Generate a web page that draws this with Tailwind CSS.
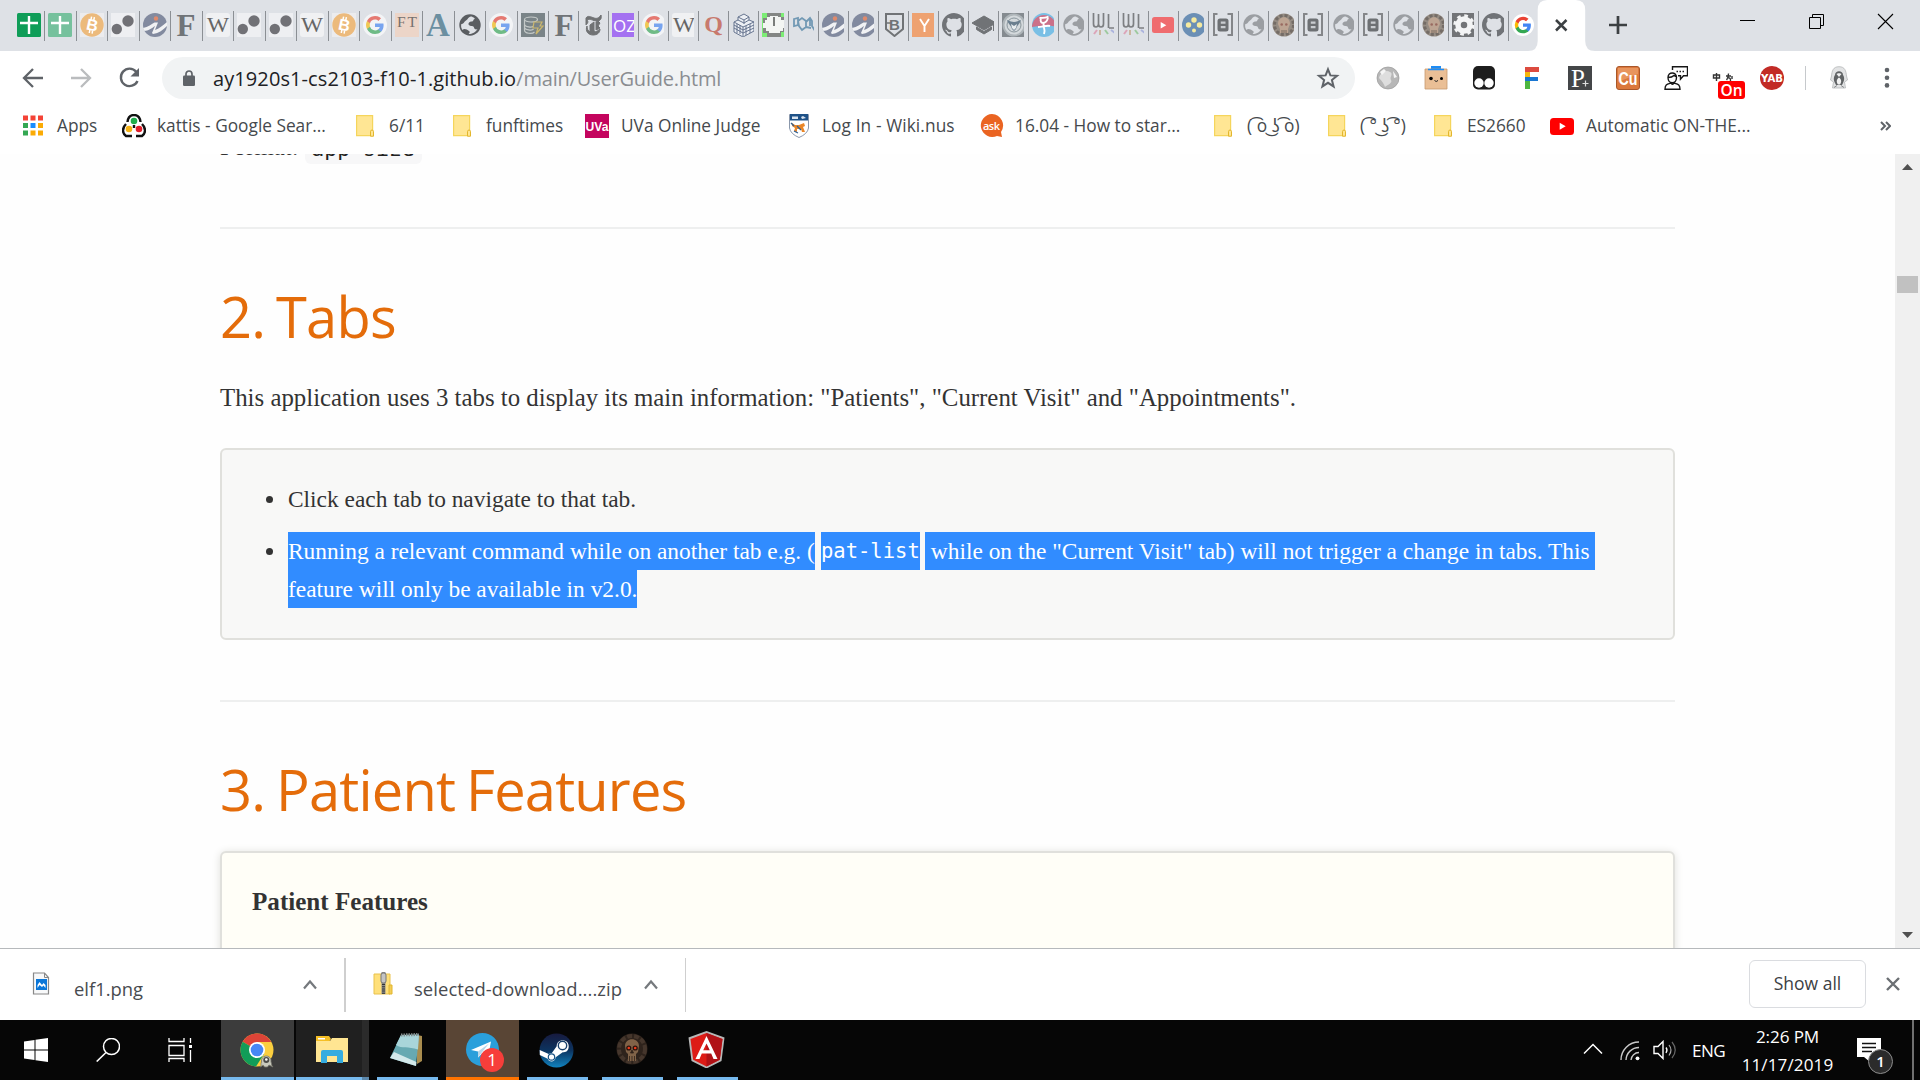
<!DOCTYPE html>
<html lang="en">
<head>
<meta charset="utf-8">
<title>User Guide</title>
<script src="https://cdn.jsdelivr.net/npm/@tailwindcss/browser@4"></script>
</head>
<body class="w-[1920px] h-[1080px] overflow-hidden bg-white flex flex-col font-['Open_Sans','Noto_Sans',sans-serif]">

<!-- shared icon symbols -->
<svg class="hidden" aria-hidden="true">
  <symbol id="sheet" viewBox="0 0 24 24"><rect width="24" height="24" rx="1.5" fill="#0f9d58"/><path d="M3 10h18M12 3v18" stroke="#fff" stroke-width="2.4"/></symbol>
  <symbol id="sheet2" viewBox="0 0 24 24"><rect width="24" height="24" rx="1.5" fill="#76c19d"/><path d="M3 10h18M12 3v18" stroke="#fff" stroke-width="2.4"/></symbol>
  <symbol id="btc" viewBox="0 0 24 24"><rect width="24" height="24" fill="#ececee"/><circle cx="12" cy="12" r="11.7" fill="#ecba7c"/><text x="12.4" y="17.6" font-size="16" font-weight="700" text-anchor="middle" fill="#fff" font-family="Liberation Sans" transform="rotate(12 12 12)">B</text><path d="M11.6 3.6l-.6 3M14.4 4.2l-.6 3M9.8 17l-.5 3M12.6 17.6l-.5 3" stroke="#fff" stroke-width="1.5"/></symbol>
  <symbol id="dots" viewBox="0 0 24 24"><rect width="24" height="24" fill="#eeeff2"/><circle cx="17" cy="8" r="5.7" fill="#717176"/><circle cx="5.8" cy="16" r="5.2" fill="#717176"/></symbol>
  <symbol id="info" viewBox="0 0 24 24"><circle cx="12" cy="12" r="12" fill="#828a9f"/><path d="M0 15C5 14 9 11 11.500 9.500H15L12 17C16 16 20 12 24 9v4c-4 4-8 7-14 8l-1-1 3-7C9 15 5 18 1.500 18z" fill="#f1f2f4"/><circle cx="13" cy="5.500" r="2.200" fill="#e08a6c"/></symbol>
  <symbol id="ef" viewBox="0 0 24 24"><text x="12" y="22.6" font-size="32" font-weight="700" text-anchor="middle" fill="#707478" font-family="Liberation Serif" textLength="19" lengthAdjust="spacingAndGlyphs">F</text></symbol>
  <symbol id="wiki" viewBox="0 0 24 24"><rect width="24" height="24" rx="3" fill="#f0f1f3"/><text x="12" y="19" font-size="20" text-anchor="middle" fill="#666" font-family="Liberation Serif" textLength="22" lengthAdjust="spacingAndGlyphs">W</text></symbol>
  <symbol id="goo" viewBox="0 0 24 24"><circle cx="12" cy="12" r="12" fill="#fff"/><g transform="translate(3 3)"><path fill="#4285f4" d="M17.600 9.200c0-.6-.1-1.300-.2-1.800H9v3.500h4.800a4.200 4.200 0 0 1-1.800 2.700v2.300h3c1.700-1.600 2.600-4 2.600-6.700z"/><path fill="#34a853" d="M9 18c2.400 0 4.500-.8 6-2.200l-3-2.200a5.400 5.400 0 0 1-8-2.900H1v2.300A9 9 0 0 0 9 18z"/><path fill="#fbbc05" d="M4 10.700a5.400 5.400 0 0 1 0-3.400V5H1a9 9 0 0 0 0 8z"/><path fill="#ea4335" d="M9 3.600c1.300 0 2.500.5 3.400 1.300L15 2.300A9 9 0 0 0 1 5l3 2.300a5.400 5.400 0 0 1 5-3.700z"/></g></symbol>
  <symbol id="gfade" viewBox="0 0 24 24"><use href="#goo" opacity=".65"/></symbol>
  <symbol id="ft" viewBox="0 0 24 24"><rect width="24" height="24" fill="#ecd5c8"/><text x="12" y="14" font-size="15.500" text-anchor="middle" fill="#75706e" font-family="Liberation Serif" textLength="20">FT</text></symbol>
  <symbol id="aa" viewBox="0 0 24 24"><text x="12" y="23" font-size="33" font-weight="700" text-anchor="middle" fill="#6b8fa1" font-family="Liberation Serif">A</text></symbol>
  <symbol id="globe" viewBox="0 0 24 24"><circle cx="12" cy="12" r="10.700" fill="#5a5d61"/><path d="M13 3.500C10 4 10 6.500 8 7.500S6 11 3.300 11c-.6 3 .2 4.500 1.200 6 1.500-2 4.500-.5 6.500 1s-1 2.500 0 3c3 0 7-2 8.500-5-1.500 1-3.500 0-3.500-1.500s-2-1.500-3-1.500-3-1-2.500-2.500 2-2 3.500-2 1-2 2.500-2.500S14 3.500 13 3.500z" fill="#dee1e6"/></symbol>
  <symbol id="gl2" viewBox="0 0 24 24"><use href="#globe" opacity=".5"/></symbol>
  <symbol id="db" viewBox="0 0 24 24"><rect width="24" height="24" fill="#7a8488"/><g fill="none" stroke="#c4c9c8" stroke-width="1.200"><ellipse cx="10" cy="6.500" rx="6.500" ry="2.500"/><path d="M3.500 7v10c0 4 8 4 10 2M3.500 11c0 3 8 4 9 2M3.500 14c0 3 8 4 9 2"/></g><path d="M13 9h8l-2 4h3l-7 8 2-6h-5z" fill="#7a8488" stroke="#cbb76e" stroke-width="1.200"/></symbol>
  <symbol id="nyt" viewBox="0 0 24 24"><path d="M4 5c2-3 5-1 8 0s5 0 7-3c1 4-1 6-4 6-4 0-7-3-10-1 2 2 0 4-1 5V8zM5 13c-2 5 1 9 6 9 4 0 7-2 7-6l-4 3-2-1V9L8 12v7c-2-1-3-3-3-6zM14 9v8l4-2-2-2 2-3-2-2z" fill="#707274" stroke="#707274"/></symbol>
  <symbol id="oz" viewBox="0 0 24 24"><rect width="24" height="24" fill="#a471f1"/><text x="12.500" y="18.500" font-size="17" text-anchor="middle" fill="#fff" font-family="Open Sans" textLength="23">OZ</text></symbol>
  <symbol id="quo" viewBox="0 0 24 24"><text x="11.500" y="19" font-size="24" font-weight="700" text-anchor="middle" fill="#c8796d" font-family="Liberation Serif">Q</text></symbol>
  <symbol id="bldg" viewBox="0 0 24 24"><path d="M2 9l4-2V4l6-3 5 3v3l5 2v9l-11 6-9-5z" fill="#eceff4" stroke="#66748f" stroke-width="1"/><path d="M6 7l6 3 5-3M6 4l6 3 5-3M12 7v4M2 9l9 5 11-5M11 14v9M2 12l9 5 11-5M2 15l9 5 11-5M5 11v9M8 12v9M14 13v9M18 11v9" fill="none" stroke="#66748f" stroke-width="1"/></symbol>
  <symbol id="clock" viewBox="0 0 24 24"><rect width="24" height="24" fill="#7ced75"/><path d="M5 0h14v4h4v15h-4v5H5v-4H1V5h4z" fill="#838684"/><path d="M8 3h8v1h3v3h3v3h1v5h-2v3h-3v2H7v-2H4v-3H1v-5h2V7h2V4h3z" fill="#f3f5f3"/><path d="M12 4v9" stroke="#7a7d7b" stroke-width="2"/></symbol>
  <symbol id="mol" viewBox="0 0 24 24"><g fill="none" stroke="#7299b4" stroke-width="1.800"><path d="M2 6l4-1v7l-4 1zM6 8l4-3 4 3v6l-4 3-3-4zM14 9l4-4 2 3v5l3 5M18 6v7M14 14l5 1"/></g></symbol>
  <symbol id="shield" viewBox="0 0 24 24"><path d="M4 1h17v15l-8.500 7L4 16z" fill="none" stroke="#707376" stroke-width="2"/><text x="12.500" y="17" font-size="15" font-weight="700" text-anchor="middle" fill="#707376" font-family="Liberation Sans">B</text><path d="M3 10h6" stroke="#707376" stroke-width="1.500"/></symbol>
  <symbol id="yc" viewBox="0 0 24 24"><rect width="24" height="24" fill="#eea271"/><path d="M8 6l4.500 7L17 6M12.500 13v6" stroke="#fff" stroke-width="1.900" fill="none"/></symbol>
  <symbol id="gh" viewBox="0 0 16 16"><path fill="#707377" d="M8 0C3.580 0 0 3.580 0 8c0 3.540 2.290 6.530 5.470 7.590.4.07.55-.17.55-.38 0-.19-.01-.82-.01-1.490-2.010.37-2.530-.49-2.690-.94-.09-.23-.48-.94-.82-1.130-.28-.15-.68-.52-.01-.53.63-.01 1.080.58 1.230.82.72 1.210 1.870.87 2.330.66.07-.52.28-.87.51-1.070-1.780-.2-3.640-.89-3.640-3.950 0-.87.31-1.590.82-2.150-.08-.2-.36-1.020.08-2.120 0 0 .67-.21 2.200.82.64-.18 1.320-.27 2-.27s1.360.09 2 .27c1.530-1.040 2.200-.82 2.200-.82.44 1.100.16 1.920.08 2.120.51.56.82 1.270.82 2.150 0 3.070-1.870 3.750-3.650 3.950.29.25.54.73.54 1.480 0 1.070-.01 1.930-.01 2.200 0 .21.15.46.55.38A8.010 8.010 0 0 0 16 8c0-4.420-3.580-8-8-8z"/></symbol>
  <symbol id="grad" viewBox="0 0 24 24"><path d="M12 3l12 7-12 7L0 10zM4.500 14l7.500 4.500 7.500-4.500v2.500L12 21l-7.500-4.500zM21.500 11v7" fill="#707376" stroke="#707376"/></symbol>
  <symbol id="seal" viewBox="0 0 24 24"><rect width="24" height="24" fill="#858b90"/><circle cx="12" cy="12" r="10.500" fill="#d4d9dc" stroke="#aeb5b9" stroke-width="2"/><circle cx="12" cy="12" r="7" fill="none" stroke="#8a969c" stroke-width="1"/><path d="M5 7c3 1 5 2 7 2s4-1 7-2c-1 4-4 5-5 9l-2 2-2-2C9 12 6 11 5 7z" fill="#6b7f8f"/><path d="M9 11l3 2 3-2-1 4-2 2-2-2z" fill="#e8ecee"/></symbol>
  <symbol id="pink" viewBox="0 0 24 24"><circle cx="12" cy="12" r="12" fill="#79bfe5"/><path d="M0 14a12 12 0 1 1 24 0c-8-3-16-1-24 0z" fill="#cb7189"/><path d="M7.500 5c3 0 7 0 9-1.500M9 5c-1 3 0 5 2 5s4-2 5-5M6 14c4 0 9-2 12-1M12 10c-2 3 2 5 0 11" fill="none" stroke="#fff" stroke-width="1.900"/></symbol>
  <symbol id="wl" viewBox="0 0 24 24"><path d="M1.500 0v11c0 4 5 4 5 0V1M6.500 11c0 4 5 4 5 0V0M16.500 1v14M17 15h6" fill="none" stroke="#7d7f82" stroke-width="1.700"/><path d="M5 17l-3 4" stroke="#dca5b8" stroke-width="2"/><path d="M8 17v5" stroke="#cbb69f" stroke-width="2"/><path d="M13 17l3 4" stroke="#9dca9f" stroke-width="2"/><path d="M19 17l4 3" stroke="#acb4de" stroke-width="2"/></symbol>
  <symbol id="yt" viewBox="0 0 24 24"><rect y="4" width="24" height="17" rx="3.500" fill="#ff0000"/><path d="M9.700 8.800v7l6-3.500z" fill="#fff"/></symbol>
  <symbol id="ytf" viewBox="0 0 24 24"><rect y="4" width="22" height="16" rx="2.500" fill="#ef6c6f"/><path d="M8.700 9v6.600l5.600-3.300z" fill="#fff"/></symbol>
  <symbol id="bdots" viewBox="0 0 24 24"><circle cx="12" cy="12" r="12" fill="#6b8fb5"/><g fill="#f6ea9f"><circle cx="12" cy="7" r="2.700"/><circle cx="6.500" cy="12" r="2.700"/><circle cx="17.500" cy="12" r="2.700"/><circle cx="12" cy="17.500" r="2"/></g></symbol>
  <symbol id="brk" viewBox="0 0 24 24"><path d="M5.500 1H2v21h3.500M15.500 1H20v21h-4.500" fill="none" stroke="#848689" stroke-width="2"/><rect x="5.500" y="5.500" width="11" height="13" rx="2.500" fill="#6d7073"/><path d="M8.800 8.600h4.700v2.200H8.800zM8.800 13h4.700v2.200H8.800z" fill="#c9ccd0"/></symbol>
  <symbol id="skullf" viewBox="0 0 24 24"><circle cx="12" cy="12" r="11.500" fill="#968d84"/><circle cx="12" cy="12" r="9.500" fill="none" stroke="#746c66" stroke-width="3" stroke-dasharray="3 2"/><path d="M6 11c0-9 12-9 12 0l-2 5v4H8v-4z" fill="#bda593"/><circle cx="9.700" cy="11.500" r="1.300" fill="#996a60"/><circle cx="14.300" cy="11.500" r="1.300" fill="#996a60"/><path d="M10 17v3M12 17v3M14 17v3" stroke="#776b60"/></symbol>
  <symbol id="gear" viewBox="0 0 24 24"><rect width="24" height="24" fill="#727477"/><circle cx="12" cy="12" r="6" fill="none" stroke="#f3f4f5" stroke-width="5.500"/><circle cx="12" cy="12" r="9.300" fill="none" stroke="#f3f4f5" stroke-width="2.800" stroke-dasharray="3.650 3.650"/></symbol>
  <symbol id="folder" viewBox="0 0 18 22"><path d="M.6.600h16v20H.6z" fill="#ffe694" stroke="#f5d55c" stroke-width="1.200"/><path d="M14.500 21.200v-4.500q0-1.700 1.500-1.700t1.500 1.700v4.500z" fill="#ffe694" stroke="#e3b62d" stroke-width="1"/></symbol>
  <symbol id="nus" viewBox="0 0 20 24"><path d="M.5.500h19V14q-1 6-9.500 9.500Q1.500 20 .5 14z" fill="#fff" stroke="#8a97ab"/><path d="M1 0h18v6.500H1z" fill="#1e5187"/><path d="M3 2.500h6v2.500H3zM12 3l2-1 3 2-4 1z" fill="#d9e3ee"/><path d="M3 9l3 2 4 0 5-2 1 3-2 1 2 5-3 0-1-3-4 0 0 3-3-1 1-3-3-2z" fill="#e98628"/><path d="M2 9l3 3M8 12l4 4M5 17l4 2" stroke="#2f5f93" stroke-width="1.300"/></symbol>
</svg>

<!-- tab strip -->
<header class="h-[51px] shrink-0 bg-[#dee1e6] flex pl-[13.7px]">
  <div id="tabs" class="flex pt-[11px] shrink-0 relative z-10"></div>
  <div class="relative w-[67px] shrink-0">
    <svg class="block w-[67px] h-[51px]" viewBox="0 0 67 51"><path d="M0 51q9.700 0 9.700-10V10q0-10 9.500-10h28.500q9.500 0 9.500 10v31q0 10 9.800 10z" fill="#fff"/><path d="M28 20l10.500 10.500M38.500 20L28 30.500" stroke="#3c4043" stroke-width="2.500"/></svg>
  </div>
  <svg class="w-[20px] h-[20px] ml-[13px] mt-[15px]" viewBox="0 0 20 20"><path d="M1 10h18M10 1v18" stroke="#3c4043" stroke-width="2.700"/></svg>
  <div class="ml-auto flex gap-[52px] pt-[13px] pr-[26px]" >
    <svg class="w-[17px] h-[17px]" viewBox="0 0 17 17"><path d="M1 7.500h15" stroke="#000"/></svg>
    <svg class="w-[17px] h-[17px]" viewBox="0 0 17 17"><path d="M1.500 4.500h11v11h-11zM4.500 4.500v-3h11v11h-3" fill="none" stroke="#000"/></svg>
    <svg class="w-[17px] h-[17px]" viewBox="0 0 17 17"><path d="M1 1l15 15M16 1L1 16" stroke="#000" stroke-width="1.100"/></svg>
  </div>
</header>

<!-- toolbar -->
<div class="h-[54px] shrink-0 flex items-center pl-[20px]">
  <svg class="w-[26px] h-[26px]" viewBox="0 0 26 26"><path d="M23 13H5M13 4l-9 9 9 9" fill="none" stroke="#5f6368" stroke-width="2.300"/></svg>
  <svg class="w-[26px] h-[26px] ml-[22px]" viewBox="0 0 26 26"><path d="M3 13h18M13 4l9 9-9 9" fill="none" stroke="#babcbe" stroke-width="2.300"/></svg>
  <svg class="w-[26px] h-[26px] ml-[22px]" viewBox="0 0 26 26"><path d="M20.200 6.700A8.700 8.700 0 1 0 21.500 16" fill="none" stroke="#5f6368" stroke-width="2.400"/><path d="M23 3v8.500h-8.500z" fill="#5f6368"/></svg>
  <div class="ml-[20px] w-[1193px] h-[42px] rounded-full bg-[#f1f3f4] flex items-center pl-[21px] pr-[15px]">
    <svg class="w-[12px] h-[17px]" viewBox="0 0 12 17"><rect y="5.500" width="12" height="10.500" rx="1.300" fill="#5f6368"/><path d="M3 6V4a3 3 0 0 1 6 0v2" fill="none" stroke="#5f6368" stroke-width="1.700"/></svg>
    <p class="ml-[18px] text-[20px] leading-[27px] whitespace-nowrap text-[#8a8d91] tracking-[-0.19px]"><span class="text-[#202124] tracking-[0.09px]">ay1920s1-cs2103-f10-1.github.io</span>/main/UserGuide.html</p>
    <svg class="ml-auto w-[24px] h-[24px]" viewBox="0 0 24 24"><path d="M12 3.300l2.400 6.100 6.600.4-5.100 4.200 1.700 6.400L12 16.800l-5.600 3.600L8.100 14 3 9.800l6.600-.4z" fill="none" stroke="#5f6368" stroke-width="2"/></svg>
  </div>
  <div class="flex items-center ml-[21px] gap-[24px]">
    <svg class="w-[24px] h-[24px]" viewBox="0 0 24 24"><circle cx="12" cy="12" r="11" fill="#b7b7b7" stroke="#999" stroke-width=".7"/><path d="M3 12c1-5 7-9 11-6 4 2-1 5 1 8s-4 5-6 7c-1-3-3-6-6-9z" fill="#dedede"/><path d="M4 6l4-3 2 2-4 4zM17 5l4 6-3 1z" fill="#f5f5f5"/></svg>
    <svg class="w-[24px] h-[24px]" viewBox="0 0 24 24"><path d="M7 0h10v4H7z" fill="#1d8cf5"/><path d="M1 3h22v20H1z" fill="#eabf96" stroke="#c79b70" stroke-width=".8"/><path d="M4 3.500h16" stroke="#1d8cf5" stroke-width="1.500"/><circle cx="7" cy="12.500" r="1.800"/><circle cx="17.500" cy="12.500" r="1.500"/><path d="M10.500 14.500q1.700 2 3.500 0" fill="none" stroke="#222"/></svg>
    <svg class="w-[24px] h-[24px]" viewBox="0 0 24 24"><rect x="1" width="22" height="23.500" rx="5" fill="#1d1d1d"/><circle cx="7" cy="17" r="4.700" fill="#fff"/><circle cx="17" cy="17" r="4.700" fill="#fff"/></svg>
    <svg class="w-[24px] h-[24px]" viewBox="0 0 24 24"><path d="M5 1h14v5H5z" fill="#dc4b3f"/><path d="M5 6h5v6H5z" fill="#f5b70d"/><path d="M5 11h13v4H5z" fill="#1976d2"/><path d="M5 15h5v8H5z" fill="#4eb640"/></svg>
    <svg class="w-[24px] h-[24px]" viewBox="0 0 24 24"><rect width="24" height="24" fill="#444648"/><text x="10" y="20.500" font-size="25" text-anchor="middle" fill="#fff" font-family="Liberation Serif">P</text><path d="M14.500 17.500h6M17.500 14.500v6" stroke="#ddd" stroke-width="1.200"/></svg>
    <svg class="w-[24px] h-[24px]" viewBox="0 0 24 24"><rect x=".5" y=".5" width="23" height="23" rx="2.500" fill="#db783c" stroke="#a9572a"/><path d="M2 2h20v6L2 16z" fill="#e8955e"/><text x="12" y="18.500" font-size="19" font-weight="700" text-anchor="middle" fill="#fff" font-family="Liberation Sans" textLength="19" lengthAdjust="spacingAndGlyphs">Cu</text></svg>
    <svg class="w-[24px] h-[24px]" viewBox="0 0 24 24"><path d="M8.500 4V.700h15v9h-4l-3 3.500V9.700h-2.500M1 23.200c0-5 2-5 6-6 1.500 1.500 1.500 1.500 3 0 4 1 6 1 6 6zM4 11.500c0-6 8.500-6 8.500 0 0 7-8.500 7-8.500 0zM4 11.500c3 0 5-1 6-2l2.500 1.500" fill="none" stroke="#161616" stroke-width="1.400"/><path d="M12.500 5.500h8" stroke="#222" stroke-width="1.300" stroke-dasharray="1.500 1.500"/></svg>
    <div class="relative w-[24px] h-[24px]">
      <svg class="w-[24px] h-[24px]" viewBox="0 0 24 24"><path d="M1.500 9h6v3h-6zM4.500 7v8M14 10h5M16.500 7.500c0 4-1 5-2 6.500M15 12q4-1 3.500 3M20 10v3" fill="none" stroke="#333" stroke-width="1.400"/></svg>
      <span class="absolute left-[6px] top-[15px] w-[27px] h-[18px] rounded-[3px] bg-[#ff0000] text-white text-[15.500px] leading-[19px] font-semibold text-center">On</span>
    </div>
    <svg class="w-[24px] h-[24px]" viewBox="0 0 24 24"><circle cx="12" cy="12" r="12" fill="#c22b26"/><text x="12" y="16" font-size="11" font-weight="700" text-anchor="middle" fill="#fff" font-family="DejaVu Sans" textLength="22" lengthAdjust="spacingAndGlyphs">YAB</text></svg>
  </div>
  <div class="w-px h-[24px] bg-[#c6c9cc] ml-[21px]"></div>
  <svg class="w-[24px] h-[24px] ml-[21px]" viewBox="0 0 24 24"><path d="M12 .7C6 .7 5 5 4.500 10l-1 4 3 2-1 6h13l-1-6 3-2-1-4C19 5 18 .7 12 .7z" fill="#e2e3e4" stroke="#b4b6b8" stroke-width=".8"/><path d="M8 9c0-5 8-5 8 0 2 3 1 6 0 8l-1 2H9l-1-2c-1-2-2-5 0-8z" fill="#606365"/><path d="M9.500 8c1-1 4-1 5 0l-2.500 3zM12 11.500c3 2 2.500 5 1 7h-2c-1.500-2-2-5 1-7z" fill="#f1f1f1"/><path d="M7 21.500l3-2M17 21.500l-3-2" stroke="#8b8d8f"/></svg>
  <svg class="w-[6px] h-[22px] ml-[33px]" viewBox="0 0 6 22"><circle cx="3" cy="3" r="2.300" fill="#5f6368"/><circle cx="3" cy="10.700" r="2.300" fill="#5f6368"/><circle cx="3" cy="18.400" r="2.300" fill="#5f6368"/></svg>
</div>

<!-- bookmarks bar -->
<nav class="h-[49px] shrink-0 flex pl-[23px] text-[17.3px] leading-[24px] text-[#45494d] whitespace-nowrap pt-[9px]">
  <div class="w-[99px] flex gap-[14px]">
    <svg class="w-[20px] h-[24px] shrink-0" viewBox="0 0 20 24"><g transform="translate(0 1.500)"><path fill="#f44336" d="M0 0h5v5H0zM7.500 0h5v5h-5zM15 0h5v5h-5z"/><path fill="#34a853" d="M0 7.500h5v5H0zM0 15h5v5H0z"/><path fill="#1a8cff" d="M7.500 7.500h5v5h-5z"/><path fill="#fbab05" d="M15 7.500h5v5h-5zM7.500 15h5v5h-5zM15 15h5v5h-5z"/></g></svg>Apps</div>
  <div class="w-[234px] flex gap-[11px]">
    <svg class="w-[24px] h-[24px] shrink-0" viewBox="0 0 24 24"><path d="M5.500 8C6 3 9 1 12 1s6 2 6.500 7M4 10c-4 4-4 9 0 12h6M20 10c4 4 4 9 0 12h-6M12 11v3" fill="none" stroke="#111" stroke-width="2.400"/><circle cx="12" cy="7" r="3.300" fill="#1fae4c"/><circle cx="7" cy="15" r="3.300" fill="#f5b315"/><circle cx="17" cy="15" r="3.300" fill="#e01e2b"/></svg>kattis - Google Sear...</div>
  <div class="w-[97px] flex gap-[15px]"><svg class="w-[18px] h-[24px] shrink-0"><use href="#folder"/></svg>6/11</div>
  <div class="w-[132px] flex gap-[15px]"><svg class="w-[18px] h-[24px] shrink-0"><use href="#folder"/></svg>funftimes</div>
  <div class="w-[204px] flex gap-[12px]"><svg class="w-[24px] h-[24px] shrink-0" viewBox="0 0 24 24"><rect width="24" height="24" fill="#c4055e"/><text x="12" y="17" font-size="12" font-weight="700" text-anchor="middle" fill="#fff" font-family="Liberation Sans" textLength="23" lengthAdjust="spacingAndGlyphs">UVa</text></svg>UVa Online Judge</div>
  <div class="w-[191px] flex gap-[13px] tracking-[0.1px]"><svg class="w-[20px] h-[24px] shrink-0"><use href="#nus"/></svg>Log In - Wiki.nus</div>
  <div class="w-[234px] flex gap-[11px]"><svg class="w-[24px] h-[24px] shrink-0" viewBox="0 0 24 24"><path d="M12 0a11.500 11.500 0 1 0 5 22l5 1-1-5A11.500 11.500 0 0 0 12 0z" fill="#ea6422"/><text x="11.500" y="15.500" font-size="11" font-weight="600" text-anchor="middle" fill="#fff" font-family="Open Sans" textLength="17">ask</text></svg>16.04 - How to star...</div>
  <div class="w-[114px] flex gap-[15px]"><svg class="w-[18px] h-[24px] shrink-0"><use href="#folder"/></svg><span class="tracking-[0.1px]">( ͡o ͜ʖ ͡o)</span></div>
  <div class="w-[106px] flex gap-[14px]"><svg class="w-[18px] h-[24px] shrink-0"><use href="#folder"/></svg><span>( ͡° ͜ʖ ͡°)</span></div>
  <div class="w-[116px] flex gap-[15px]"><svg class="w-[18px] h-[24px] shrink-0"><use href="#folder"/></svg>ES2660</div>
  <div class="w-[330px] flex gap-[12px]"><svg class="w-[24px] h-[24px] shrink-0"><use href="#yt"/></svg>Automatic ON-THE...</div>
  <svg class="w-[11px] h-[24px] shrink-0" viewBox="0 0 11 24"><path d="M1 8l4 4-4 4M6 8l4 4-4 4" fill="none" stroke="#5f6368" stroke-width="2"/></svg>
</nav>

<!-- page -->
<div class="h-[794px] shrink-0 flex overflow-hidden bg-[#fefefe]">
  <main class="w-[1455px] ml-[220px] shrink-0 font-['Liberation_Serif',serif] text-[#333]">
    <p class="-mt-[26px] h-[37px] flex text-[24.8px] leading-[37px]">Format: <code class="ml-[6px] h-[36px] w-[117px] bg-[#f7f7f8] rounded-[6px] text-center text-[21.500px] leading-[41px] text-[#222] font-['DejaVu_Sans_Mono',monospace]">app-size</code></p>
    <hr class="mt-[62px] h-[2px] border-0 bg-[#eeefef]">
    <h2 class="mt-[53px] text-[56px] leading-[68px] text-[#e46c0a] tracking-[-0.8px] [word-spacing:-2.8px] font-['Open_Sans',sans-serif]">2. Tabs</h2>
    <p class="mt-[29px] text-[24.850px] leading-[37px] whitespace-nowrap">This application uses 3 tabs to display its main information: "Patients", "Current Visit" and "Appointments".</p>
    <div class="mt-[32px] h-[192px] border-2 border-[#e0e0dc] rounded-[6px] bg-[#f8f8f7] py-[30px] pl-[44px] text-[23.4px] leading-[38px]">
      <ul class="flex flex-col gap-[14px]">
        <li class="flex"><span class="w-[7px] h-[7px] rounded-full bg-[#333] mt-[16px] mr-[15px]"></span><span>Click each tab to navigate to that tab.</span></li>
        <li class="flex"><span class="w-[7px] h-[7px] rounded-full bg-[#333] mt-[16px] mr-[15px]"></span>
          <div class="text-white whitespace-nowrap">
            <div class="flex gap-[6px]">
              <span class="bg-[#318cff] w-[527px] h-[38px]">Running a relevant command while on another tab e.g. (</span>
              <code class="bg-[#318cff] w-[99px] h-[38px] text-[20.5px] font-['DejaVu_Sans_Mono',monospace]">pat-list</code>
              <span class="bg-[#318cff] w-[670px] h-[38px] -ml-px whitespace-pre"> while on the "Current Visit" tab) will not trigger a change in tabs. This </span>
            </div>
            <span class="bg-[#318cff] w-[349px] h-[38px] block">feature will only be available in v2.0.</span>
          </div>
        </li>
      </ul>
    </div>
    <hr class="mt-[60px] h-[2px] border-0 bg-[#eeefef]">
    <h2 class="mt-[53px] text-[56px] leading-[68px] text-[#e46c0a] tracking-[-0.8px] [word-spacing:-2.8px] font-['Open_Sans',sans-serif]">3. Patient Features</h2>
    <section class="mt-[28px] h-[200px] border-2 border-[#e0e0dc] rounded-[6px] bg-[#fffef7] shadow-[0_1px_8px_#e0e0dc] pt-[30px] pl-[30px]">
      <h3 class="text-[25.1px] leading-[37px] font-bold">Patient Features</h3>
    </section>
  </main>
  <div class="ml-auto w-[25px] bg-[#f0f0f0] flex flex-col items-center pt-[10px] pb-[10px]">
    <svg class="w-[11px] h-[6px]" viewBox="0 0 11 6"><path d="M0 6L5.500 0 11 6z" fill="#505050"/></svg>
    <div class="mt-[106px] w-[21px] h-[17px] bg-[#c1c1c1]"></div>
    <svg class="mt-auto w-[11px] h-[6px]" viewBox="0 0 11 6"><path d="M0 0l5.500 6L11 0z" fill="#505050"/></svg>
  </div>
</div>

<!-- downloads shelf -->
<div class="h-[72px] shrink-0 border-t border-[#b6b9bc] flex items-center pl-[32px] text-[18.4px] leading-[25px] text-[#484b4f]">
  <svg class="w-[18px] h-[24px] -mt-px" viewBox="0 0 18 24"><path d="M1.500 1h11l4 4.500V22h-15z" fill="#f8f9fa" stroke="#888" stroke-width="1.200"/><path d="M12.500 1v4.500h4" fill="none" stroke="#888"/><path d="M4 7h11v11H4z" fill="#0a76d8"/><path d="M5.500 16v-3l2-3 2.500 3 1.500-2 2 2v3l-2-2.500-1.500 1.500-2.500-2z" fill="#fff"/></svg>
  <span class="ml-[24px] mt-[7px] w-[228px]">elf1.png</span>
  <svg class="w-[16px] h-[11px]" viewBox="0 0 16 11"><path d="M2 9.500l6-7 6 7" fill="none" stroke="#75797d" stroke-width="2.200"/></svg>
  <div class="w-[2px] h-[54px] bg-[#cfcfcf] ml-[26px]"></div>
  <svg class="w-[20px] h-[24px] ml-[27px] -mt-px" viewBox="0 0 20 24"><path d="M1 2h16v20H1z" fill="#ffe07a" stroke="#e9c24d"/><path d="M16 13h3v9h-3z" fill="#f2cd58" stroke="#e3b62d"/><path d="M10.500 0v22" stroke="#8d8d8d" stroke-width="4"/><path d="M10.500 12v10" stroke="#333" stroke-width="3" stroke-dasharray="1 1.200"/><rect x="8" y="1" width="5" height="10" rx="2" fill="#c4c4c4" stroke="#777"/></svg>
  <span class="ml-[21px] mt-[7px] w-[229px] tracking-[0.1px]">selected-download....zip</span>
  <svg class="w-[16px] h-[11px]" viewBox="0 0 16 11"><path d="M2 9.500l6-7 6 7" fill="none" stroke="#75797d" stroke-width="2.200"/></svg>
  <div class="w-px h-[54px] bg-[#cfcfcf] ml-[26px]"></div>
  <button class="ml-auto w-[117px] h-[48px] border border-[#dadce0] rounded-[6px] text-[17.500px] text-[#3c4043] pb-[2px] -mt-px">Show all</button>
  <svg class="w-[16px] h-[16px] ml-[19px] mr-[19px] -mt-px" viewBox="0 0 16 16"><path d="M2 2l12 12M14 2L2 14" stroke="#6b6f73" stroke-width="2.400"/></svg>
</div>

<!-- taskbar -->
<footer class="h-[60px] shrink-0 bg-[#060606] text-white flex">
  <div class="flex items-center w-[221px] pl-[24px] gap-[48px]">
    <svg class="w-[24px] h-[24px]" viewBox="0 0 24 24"><path d="M0 3.500l10.500-1.600v9.600H0zM11.500 1.700L24 0v11.500H11.500zM0 12.500h10.500v9.600L0 20.500zM11.500 12.500H24V24l-12.500-1.700z" fill="#fff"/></svg>
    <svg class="w-[24px] h-[24px]" viewBox="0 0 24 24"><circle cx="15.500" cy="8.500" r="8" fill="none" stroke="#fff" stroke-width="1.500"/><path d="M10 14.500L.700 23.500" stroke="#fff" stroke-width="1.600"/></svg>
    <svg class="w-[24px] h-[24px]" viewBox="0 0 24 24"><path d="M1 0v3.500h15V0M1 7.500h15v10H1zM1 24v-3.500h15V24M22.500 0v5M22.500 12v12" fill="none" stroke="#fff" stroke-width="1.300"/><path d="M21 7h3v3h-3z" fill="#fff"/></svg>
  </div>
  <div class="w-[73px] bg-[#3c3c3c] border-b-[3px] border-[#76b9ed] flex justify-center items-center pt-[3px] pr-px">
    <svg class="w-[36px] h-[36px]" viewBox="0 0 36 36"><circle cx="18" cy="18" r="16.500" fill="#fbcf3f"/><path d="M18 18L3.700 9.700A16.500 16.500 0 0 1 32.300 10H18z" fill="#dc4437"/><path d="M3.700 9.700A16.500 16.500 0 0 0 17 34.500L25 22l-7-4z" fill="#119d58"/><circle cx="18" cy="18" r="8" fill="#fff"/><circle cx="18" cy="18" r="6.300" fill="#4687f4"/><path d="M21.500 35c1-2 0-3 1-5-1-8 10.500-8 9.500 0 1 2 0 3 2 5l-4-2-1.500 2h-3L24 33z" fill="#c8c9bc" stroke="#77776d" stroke-width=".8"/><circle cx="27.300" cy="28" r="3" fill="#4d4d49"/><circle cx="27.300" cy="27.500" r="1.300" fill="#fff"/></svg>
  </div>
  <div class="w-[66px] ml-[2px] bg-[#202020] border-b-[3px] border-[#76b9ed] flex justify-center items-center pt-[3px] pl-[5px]">
    <svg class="w-[34px] h-[30px]" viewBox="0 0 34 30"><path d="M1 1h13l2 3-2 3H1z" fill="#f5bf25"/><path d="M3 3h7v1.500H3z" fill="#fff"/><path d="M1 6h14l2-3h16v24H1z" fill="#ffe592"/><path d="M6 28V17q0-2 2-2h18q2 0 2 2v11h-6v-7H12v7z" fill="#35ace0"/></svg>
  </div>
  <div class="w-[7px] bg-[#2b2b2b] border-b-[3px] border-[#5c88ab]"></div>
  <div class="w-[61px] ml-[8px] border-b-[3px] border-[#76b9ed] flex justify-center items-center pt-[2px] pr-[4px]">
    <svg class="w-[36px] h-[36px]" viewBox="0 0 36 36"><path d="M29 3l5 1v25l-5 3z" fill="#a98c4e"/><path d="M13 3l18-.500-3 31.500L2 26z" fill="#67a9b2"/><path d="M13 3l18-.500-1 15C20 14 14 17 8 13z" fill="#a9d5da"/><path d="M2 26l26 8 .4-4L6 20z" fill="#d3e8ea"/><path d="M13 3l18-.5" stroke="#828b8b" stroke-width="3" stroke-dasharray="1.500 1"/></svg>
  </div>
  <div class="w-[73px] ml-[8px] bg-[#594535] border-b-[3px] border-[#ff7300] flex justify-center items-center pt-[2px]">
    <div class="relative w-[33px] h-[33px]">
      <svg class="w-[33px] h-[33px]" viewBox="0 0 33 33"><circle cx="16.500" cy="16.500" r="16.500" fill="#2a9fdb"/><path d="M5 17L25 8.500l-3 16-6-4-4 4v-6z" fill="#fff"/><path d="M12 18.500l11-8-8 10-3 4z" fill="#b7d6e8"/></svg>
      <span class="absolute left-[14px] top-[15px] w-[24px] h-[24px] rounded-full bg-[#f73e3a] text-[17px] leading-[24px] text-center">1</span>
    </div>
  </div>
  <div class="w-[61px] ml-[8px] border-b-[3px] border-[#76b9ed] flex justify-center items-center pt-[3px] pr-[2px]">
    <svg class="w-[35px] h-[35px]" viewBox="0 0 35 35"><defs><linearGradient id="sg" x2="0" y2="1"><stop stop-color="#171a3e"/><stop offset=".5" stop-color="#0c3460"/><stop offset="1" stop-color="#1183bf"/></linearGradient></defs><circle cx="17.500" cy="17.500" r="17" fill="url(#sg)"/><path d="M.7 17l9 4c1-.6 2-.8 3-.7l5-7c0-8 12-8 12 0 0 5-3 6-6 6l-7 5c-1 6-7 5-8 1.500L.8 22z" fill="#fff"/><circle cx="23.500" cy="12.500" r="4.200" fill="#fff" stroke="#1a416c" stroke-width="1.400"/><circle cx="12.500" cy="24" r="3.200" fill="#fff" stroke="#1a5485" stroke-width="1.200"/></svg>
  </div>
  <div class="w-[61px] ml-[14px] border-b-[3px] border-[#76b9ed] flex justify-center items-center pt-px pr-[2px]">
    <svg class="w-[34px] h-[34px]" viewBox="0 0 34 34"><circle cx="17" cy="17" r="15.500" fill="#2e231c"/><circle cx="17" cy="17" r="13" fill="none" stroke="#45362c" stroke-width="4" stroke-dasharray="5 2"/><path d="M10 14C10 5 24 5 24 14l-1 6-2 2v7h-8v-7l-2-2z" fill="#806348"/><circle cx="13.800" cy="16" r="2.600" fill="#28120c"/><circle cx="20.200" cy="16" r="2.600" fill="#28120c"/><circle cx="13.800" cy="16" r="1.300" fill="#ef3b19"/><circle cx="20.200" cy="16" r="1.300" fill="#ef3b19"/><path d="M17 18l-1.500 3h3zM14.500 24v5M17 24v5M19.500 24v5" stroke="#2f221a" stroke-width=".8" fill="#2f221a"/></svg>
  </div>
  <div class="w-[61px] ml-[14px] border-b-[3px] border-[#76b9ed] flex justify-center items-center pt-[2px] pr-[2px]">
    <svg class="w-[37px] h-[37px]" viewBox="0 0 37 37"><path d="M18.500 0L36.500 6.500l-3 23.500-15 7.500-15-7.500L.500 6.500z" fill="#b7b7b7"/><path d="M18.500 2L34.500 8 31.800 28.800 18.500 35.500 5.200 28.800 2.500 8z" fill="#dd1b16"/><path d="M18.500 2L34.500 8 31.800 28.800 18.500 35.500z" fill="#b01116"/><path d="M18.500 5L7.500 28h4l2.300-5.500h9.400l2.300 5.500h4zM18.500 12.500l3.300 6.800h-6.600z" fill="#fff" fill-rule="evenodd"/></svg>
  </div>

  <div class="ml-auto flex items-center text-[17.100px]">
    <svg class="w-[20px] h-[12px] -mt-[2px]" viewBox="0 0 20 12"><path d="M1 10.500L10 1.500l9 9" fill="none" stroke="#fff" stroke-width="1.500"/></svg>
    <svg class="w-[20px] h-[20px] ml-[17px] mt-[2px]" viewBox="0 0 20 20"><path d="M1 19A18 18 0 0 1 19 1M6 19A13 13 0 0 1 19 6.500M11 19a8 8 0 0 1 8-7.500" fill="none" stroke="#c9c9c9" stroke-width="1.400"/><circle cx="17.500" cy="17.300" r="1.900" fill="#fff"/></svg>
    <svg class="w-[24px] h-[20px] ml-[13px]" viewBox="0 0 24 20"><path d="M1 6.500h4l5-5v17l-5-5H1z" fill="none" stroke="#fff" stroke-width="1.400"/><path d="M13 7.500q2 2.500 0 5.500" fill="none" stroke="#fff" stroke-width="1.300"/><path d="M16 5q4 5 0 10.500" fill="none" stroke="#aaa" stroke-width="1.200"/><path d="M19 2q6.500 8 0 16" fill="none" stroke="#666" stroke-width="1.200"/></svg>
    <span class="ml-[15px] w-[34px] tracking-[-0.6px] mt-[2px]">ENG</span>
    <div class="ml-[14px] w-[95px] text-center leading-[28px] mt-[2px]"><div class="tracking-[-0.1px]">2:26 PM</div><div class="tracking-[0.1px]">11/17/2019</div></div>
    <div class="relative w-[40px] h-[40px] ml-[22px]">
      <svg class="w-[25px] h-[30px] mt-[8px]" viewBox="0 0 25 30"><path d="M0 0h24v19H13v5l-6-5H0z" fill="#fff"/><path d="M5 5.500h14M5 9.500h14M5 13.500h10" stroke="#111" stroke-width="1.300"/></svg>
      <span class="absolute left-[11px] top-[19px] w-[25px] h-[25px] rounded-full bg-[#2b2b2b] border border-[#8c8c8c] text-[15px] leading-[23px] text-center font-semibold">1</span>
    </div>
    <div class="w-[2px] h-[60px] bg-[#707070] ml-[15px] mr-[6px]"></div>
  </div>
</footer>

<script>
const tabs = ['sheet','sheet2','btc','dots','info','ef','wiki','dots','dots','wiki','btc','gfade','ft','aa','globe','gfade','db',
  'ef','nyt','oz','gfade','wiki','quo','bldg','clock','mol','info','info','shield','yc','gh','grad','seal','pink','gl2','wl','wl',
  'ytf','bdots','brk','gl2','skullf','brk','gl2','brk','gl2','skullf','gear','gh'];
document.getElementById('tabs').innerHTML = tabs.map((id, i) => {
  const cell = i < 17 ? 'w-[31.5px]' : 'w-[30px]';
  const clip = i < 17 ? 'w-[24px]' : 'w-[22px]';
  return `<div class="${cell} h-[30px] shrink-0 flex justify-between pl-[3px] border-r-[1.500px] border-[#8b8f94]"><div class="${clip} h-[24px] mt-[2px] overflow-hidden"><svg class="w-[24px] h-[24px]"><use href="#${id}"/></svg></div></div>`;
}).join('') + '<div class="w-[19.2px] pl-[3px] mt-[2px]"><svg class="w-[22px] h-[24px] max-w-none"><use href="#goo"/></svg></div>';
</script>
</body>
</html>
